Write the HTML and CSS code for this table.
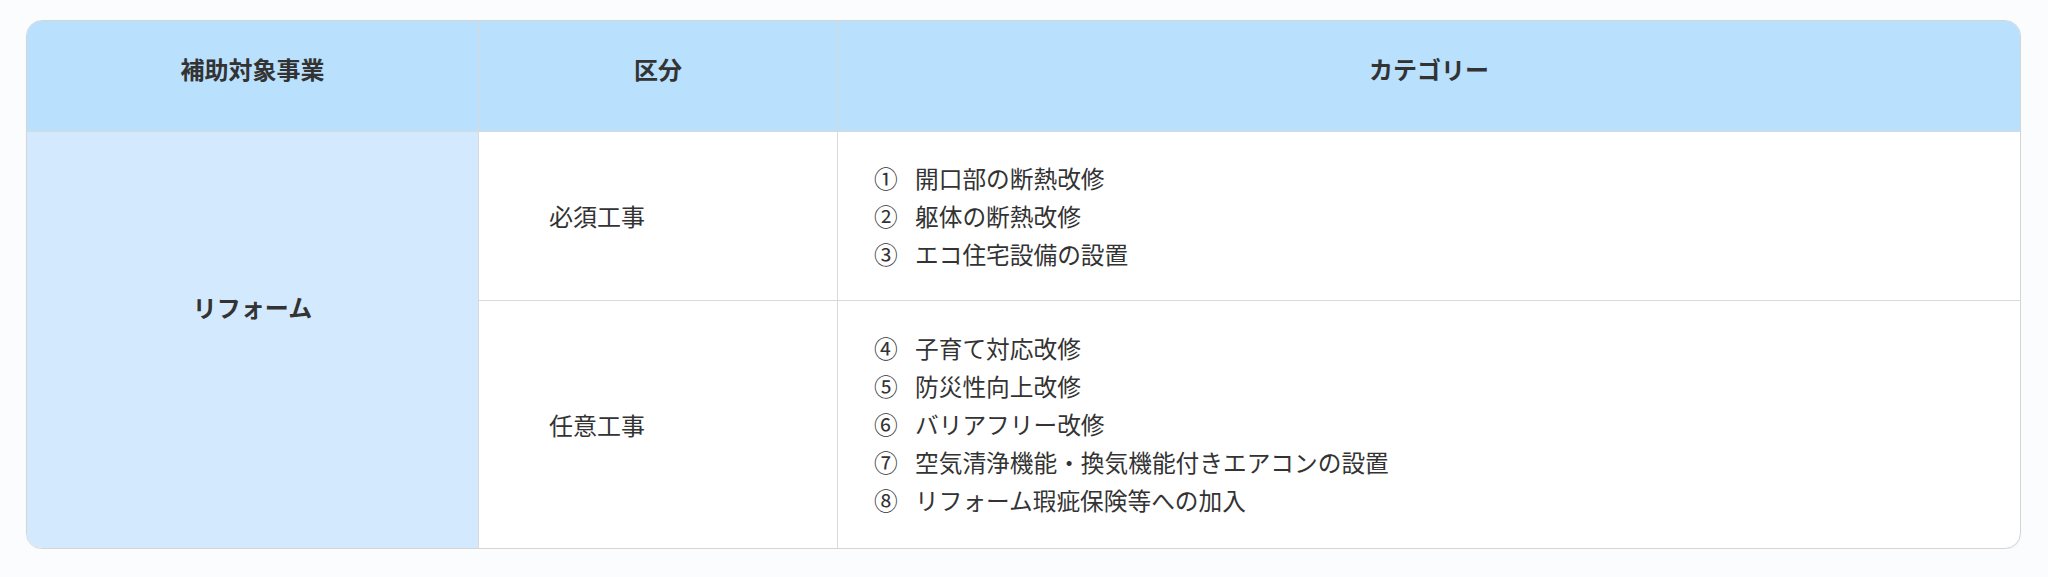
FILE: index.html
```html
<!DOCTYPE html>
<html lang="ja">
<head>
<meta charset="utf-8">
<title>補助対象事業</title>
<link rel="stylesheet" href="styles.css">
</head>
<body>
<div class="wrap">
  <table class="grid">
    <colgroup>
      <col class="c1">
      <col class="c2">
      <col class="c3">
    </colgroup>
    <thead>
      <tr>
        <th>補助対象事業</th>
        <th>区分</th>
        <th class="last">カテゴリー</th>
      </tr>
    </thead>
    <tbody>
      <tr>
        <td class="biz" rowspan="2">リフォーム</td>
        <td class="kind">必須工事</td>
        <td class="cat last">
          <div class="item"><span class="num">①</span><span>開口部の断熱改修</span></div>
          <div class="item"><span class="num">②</span><span>躯体の断熱改修</span></div>
          <div class="item"><span class="num">③</span><span>エコ住宅設備の設置</span></div>
        </td>
      </tr>
      <tr>
        <td class="kind bottom">任意工事</td>
        <td class="cat last bottom">
          <div class="item"><span class="num">④</span><span>子育て対応改修</span></div>
          <div class="item"><span class="num">⑤</span><span>防災性向上改修</span></div>
          <div class="item"><span class="num">⑥</span><span>バリアフリー改修</span></div>
          <div class="item"><span class="num">⑦</span><span>空気清浄機能・換気機能付きエアコンの設置</span></div>
          <div class="item"><span class="num">⑧</span><span>リフォーム瑕疵保険等への加入</span></div>
        </td>
      </tr>
    </tbody>
  </table>
</div>
</body>
</html>
```

FILE: styles.css
```css
html, body {
  margin: 0;
  padding: 0;
  background: #fbfcfe;
}

body {
  font-family: "Noto Sans CJK JP", "Noto Sans", sans-serif;
  color: #333333;
  padding: 20px 27px 0 26px;
}

.wrap {
  border: 1px solid #d5d5d5;
  border-radius: 16px;
  overflow: hidden;
  background: #ffffff;
  box-shadow: 0 1px 2px rgba(0, 0, 0, 0.04);
}

.grid {
  width: 100%;
  border-collapse: separate;
  border-spacing: 0;
  table-layout: fixed;
}

.c1 { width: 452px; }
.c2 { width: 359px; }

.grid th,
.grid td {
  box-sizing: border-box;
  border-right: 1px solid #d9d9d9;
  border-bottom: 1px solid #d9d9d9;
  font-size: 24px;
  line-height: 38px;
}

.grid .last { border-right: none; }
.grid .bottom { border-bottom: none; }

.grid th {
  background: #b9e0fd;
  font-weight: 700;
  text-align: center;
  padding: 29px 0 43px 0;
  color: #333333;
}

.biz {
  background: #d3e9fd;
  font-weight: 700;
  text-align: center;
  vertical-align: top;
  padding: 156px 0 0 0;
  border-bottom: none !important;
}

.kind {
  vertical-align: middle;
  padding: 0 0 0 70px;
}

.grid .cat {
  padding: 27px 0 27px 36px;
  vertical-align: middle;
  font-size: 23.7px;
}

.grid .cat.bottom {
  padding: 28px 0 29px 36px;
}

.item {
  display: flex;
}

.num {
  width: 41px;
  flex: none;
}
```
